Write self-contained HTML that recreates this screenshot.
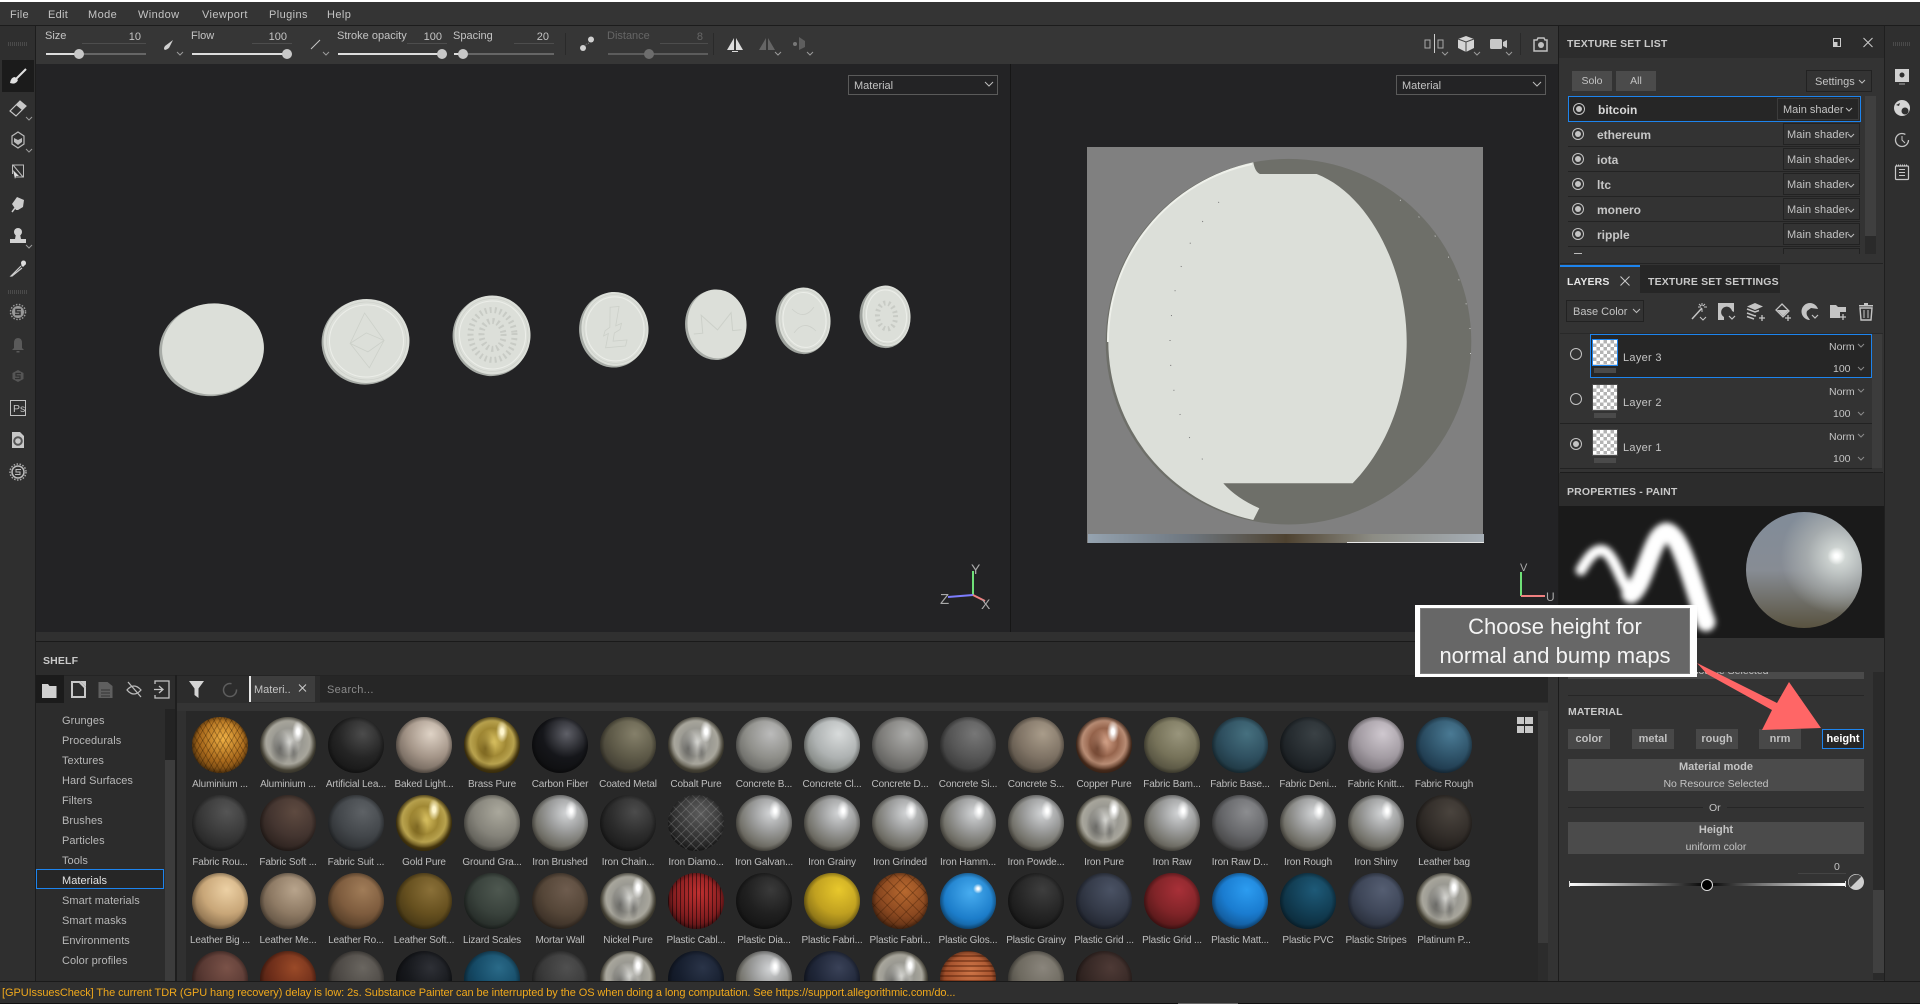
<!DOCTYPE html>
<html lang="en"><head><meta charset="utf-8"><title>Substance Painter</title>
<style>
html,body{margin:0;padding:0}
body{width:1920px;height:1004px;position:relative;overflow:hidden;background:#333;font-family:"Liberation Sans",sans-serif;font-size:11px;color:#c4c4c4}
.r{position:absolute}
.t{position:absolute;line-height:14px;white-space:nowrap;margin-top:1px}
.h{font-weight:bold;font-size:10.5px;color:#c9c9c9;letter-spacing:.15px}
.d{position:absolute;border:1px solid #555;box-sizing:border-box;color:#c4c4c4;line-height:20px;padding-left:5px}
.btn{position:absolute;background:#4b4b4b;text-align:center;color:#c4c4c4;line-height:21px;font-size:10.5px}
.mb{font-weight:bold;font-size:11px;background:#484848;color:#c0c0c0;top:729px;height:20px;width:42px}
.row{position:absolute;left:1568px;width:292px;height:1px;background:#232323}
.dd{position:absolute;left:1783px;width:77px;height:22px;border:1px solid #222;box-sizing:border-box;line-height:22px;padding-left:3px;color:#c4c4c4;font-size:11px;letter-spacing:.1px}
.nm{font-weight:bold;font-size:12px;color:#c6c6c6;left:1597px}
.cat{left:62px;font-size:11px;letter-spacing:.05px;color:#b8b8b8}
#grid{position:absolute;left:186px;top:717px;width:1352px;height:264px;overflow:hidden;display:flex;flex-wrap:wrap;align-content:flex-start}
.c{position:relative;width:68px;height:78px;flex:none}
.c i{position:absolute;left:6px;top:0;width:56px;height:56px;border-radius:50%;background:radial-gradient(circle 50px at 62% 30%,var(--a),var(--b) 48%,var(--c) 100%)}
.c i::after{content:"";position:absolute;left:0;top:0;width:56px;height:56px;border-radius:50%;background:radial-gradient(circle 28px at 50% 50%,rgba(0,0,0,0) 84%,rgba(0,0,0,.3) 100%)}
.c span{position:absolute;left:0;top:61px;width:68px;text-align:center;line-height:14px;font-size:10px;letter-spacing:-.15px;color:#bdbdbd;white-space:nowrap}
.c i.st{background:radial-gradient(ellipse 6px 10px at 70% 28%,#fff 20%,rgba(255,255,255,0) 100%),radial-gradient(circle 44px at 62% 32%,#d4d6d8,#a0a1a1 38%,#77766f 70%,#4a463c 100%)}
.c i.ch{background:radial-gradient(ellipse 6px 11px at 68% 26%,#fff 25%,rgba(255,255,255,0) 100%),radial-gradient(ellipse 10px 18px at 36% 56%,rgba(30,30,30,.45),rgba(30,30,30,0)),radial-gradient(ellipse 5px 12px at 60% 62%,rgba(40,40,40,.35),rgba(40,40,40,0)),radial-gradient(circle 28px at 50% 45%,#d8d8d4,#9a9992 50%,#a8a69c 78%,#4e4a3c 100%)}
.c i.gd{background:radial-gradient(ellipse 6px 11px at 68% 26%,#fff6cc 25%,rgba(255,255,255,0) 100%),radial-gradient(ellipse 10px 18px at 38% 56%,rgba(70,50,0,.5),rgba(70,50,0,0)),radial-gradient(circle 28px at 50% 45%,#e0c866,#a08834 50%,#b8a24e 78%,#4e3d10 100%)}
.c i.cu{background:radial-gradient(ellipse 6px 11px at 66% 26%,#fff 25%,rgba(255,255,255,0) 100%),radial-gradient(ellipse 10px 18px at 38% 56%,rgba(60,25,10,.5),rgba(60,25,10,0)),radial-gradient(circle 28px at 50% 45%,#dcaa90,#96644c 50%,#b88c74 78%,#50301f 100%)}
.c i.or{background-image:repeating-linear-gradient(60deg,rgba(40,20,0,.3) 0 1px,transparent 1px 5px),repeating-linear-gradient(-60deg,rgba(40,20,0,.3) 0 1px,transparent 1px 5px),radial-gradient(circle 46px at 56% 38%,#efb044,#a8691c 50%,#3c2408 100%)}
.c i.rd{background-image:repeating-linear-gradient(90deg,rgba(0,0,0,.5) 0 1px,transparent 1px 4px),radial-gradient(circle 46px at 55% 35%,#bf3030,#851e20 55%,#2e0b0c 100%)}
.c i.wd{background-image:repeating-linear-gradient(0deg,rgba(70,20,0,.4) 0 2px,transparent 2px 5px),radial-gradient(circle 46px at 55% 35%,#cf7648,#a04e2a 55%,#451e0e 100%)}
.c i.dm{background-image:repeating-linear-gradient(45deg,rgba(160,160,160,.28) 0 1px,transparent 1px 7px),repeating-linear-gradient(-45deg,rgba(160,160,160,.28) 0 1px,transparent 1px 7px),radial-gradient(circle 46px at 58% 32%,#5c5c5c,#333 55%,#111 100%)}
.c i.ob{background-image:repeating-linear-gradient(45deg,rgba(50,20,0,.3) 0 1px,transparent 1px 9px),repeating-linear-gradient(-45deg,rgba(50,20,0,.3) 0 1px,transparent 1px 9px),radial-gradient(circle 46px at 58% 32%,#b8692f,#8a4820 55%,#3e1e0c 100%)}
.c i.bg{background:radial-gradient(circle 5px at 68% 28%,#fff 20%,rgba(255,255,255,0) 100%),radial-gradient(circle 48px at 55% 35%,#48adf0,#1c7dca 55%,#0a3a60 100%)}
</style></head><body>

<!-- base regions -->
<div class="r" style="left:0;top:0;width:1920px;height:2px;background:#fff"></div>
<div class="r" style="left:0;top:2px;width:1920px;height:23px;background:#343434"></div>
<div class="r" style="left:0;top:25px;width:1920px;height:1px;background:#1c1c1c"></div>
<div class="r" style="left:0;top:26px;width:35px;height:955px;background:#2f2f2f"></div>
<div class="r" style="left:35px;top:26px;width:1px;height:955px;background:#1d1d1d"></div>
<div class="r" style="left:36px;top:26px;width:1522px;height:38px;background:#363636"></div>
<div class="r" style="left:36px;top:64px;width:1522px;height:568px;background:#232325"></div>
<div class="r" style="left:1010px;top:64px;width:1px;height:568px;background:#161616"></div>
<div class="r" style="left:36px;top:632px;width:1522px;height:9px;background:#303030"></div>
<div class="r" style="left:36px;top:641px;width:1522px;height:1px;background:#1a1a1a"></div>
<div class="r" style="left:36px;top:642px;width:1522px;height:339px;background:#2c2c2c"></div>
<div class="r" style="left:1558px;top:26px;width:1px;height:955px;background:#1c1c1c"></div>
<div class="r" style="left:1559px;top:26px;width:325px;height:32px;background:#2c2c2c"></div>
<div class="r" style="left:1884px;top:26px;width:1px;height:955px;background:#1f1f1f"></div>
<div class="r" style="left:1885px;top:26px;width:35px;height:955px;background:#2f2f2f"></div>

<!-- menu -->
<div class="t" style="left:10px;top:7px;letter-spacing:.3px">File</div>
<div class="t" style="left:48px;top:7px;letter-spacing:.3px">Edit</div>
<div class="t" style="left:88px;top:7px;letter-spacing:.4px">Mode</div>
<div class="t" style="left:138px;top:7px;letter-spacing:.4px">Window</div>
<div class="t" style="left:202px;top:7px;letter-spacing:.4px">Viewport</div>
<div class="t" style="left:269px;top:7px;letter-spacing:.4px">Plugins</div>
<div class="t" style="left:327px;top:7px;letter-spacing:.4px">Help</div>

<!-- toolbar labels -->
<div class="t" style="left:45px;top:28px">Size</div><div class="t" style="left:100px;top:29px;width:41px;text-align:right">10</div>
<div class="t" style="left:191px;top:28px">Flow</div><div class="t" style="left:250px;top:29px;width:37px;text-align:right">100</div>
<div class="t" style="left:337px;top:28px">Stroke opacity</div><div class="t" style="left:410px;top:29px;width:32px;text-align:right">100</div>
<div class="t" style="left:453px;top:28px">Spacing</div><div class="t" style="left:510px;top:29px;width:39px;text-align:right">20</div>
<div class="t" style="left:607px;top:28px;color:#666">Distance</div><div class="t" style="left:670px;top:29px;width:33px;text-align:right;color:#666">8</div>

<!-- viewport dropdowns -->
<div class="d" style="left:848px;top:75px;width:150px;height:20px;border-color:#5a5a5a">Material</div>
<div class="d" style="left:1396px;top:75px;width:150px;height:20px;border-color:#5a5a5a">Material</div>

<!-- scene + icons -->
<svg class="r" style="left:0;top:0" width="1920" height="1004" viewBox="0 0 1920 1004">
<defs>
<linearGradient id="sg" x1="0" x2="1"><stop offset="0" stop-color="#95a3b0"/><stop offset=".25" stop-color="#6e7780"/><stop offset=".5" stop-color="#4e4230"/><stop offset=".72" stop-color="#8c8c84"/><stop offset="1" stop-color="#a5adb5"/></linearGradient>
<filter id="bl" x="-20%" y="-20%" width="140%" height="140%"><feGaussianBlur stdDeviation="3"/></filter>
<clipPath id="pc"><rect x="1559" y="506" width="325" height="132"/></clipPath>
</defs>

<!-- sliders -->
<g stroke-width="2">
<path d="M46 54H146" stroke="#666"/><path d="M46 54H79" stroke="#ddd"/>
<path d="M192 54H292" stroke="#666"/><path d="M192 54H287" stroke="#ddd"/>
<path d="M338 54H447" stroke="#666"/><path d="M338 54H442" stroke="#ddd"/>
<path d="M454 54H554" stroke="#666"/><path d="M454 54H463" stroke="#ddd"/>
<path d="M608 54H708" stroke="#5c5c5c"/>
</g>
<path d="M82 43.500H146M252 43.500H292M407 43.500H447M514 43.500H554M660 43.500H708" stroke="#4d4d4d"/>
<circle cx="79" cy="54" r="5" fill="#c8c8c8"/><circle cx="287" cy="54" r="5" fill="#c8c8c8"/><circle cx="442" cy="54" r="5" fill="#c8c8c8"/><circle cx="463" cy="54" r="5" fill="#c8c8c8"/><circle cx="649" cy="54" r="5" fill="#6d6d6d"/>
<path d="M565.500 33V55M713.500 33V55M1520.500 33V55" stroke="#2a2a2a"/>

<!-- toolbar icons -->
<path d="M173 40L165 46Q163 49 165 50Q169 49 170 46Z" fill="#d0d0d0"/>
<path d="M311 49L320 40" stroke="#c8c8c8"/>
<circle cx="591" cy="39.500" r="3" fill="#d0d0d0"/><circle cx="583" cy="48" r="3" fill="#d0d0d0"/><path d="M589 43L585 45" stroke="#888" stroke-dasharray="1 1"/>
<path d="M734 38V50H727ZM736 38V50H743Z" fill="#dcdcdc"/><path d="M732 51h6v1h-6z" fill="#dcdcdc"/>
<path d="M766 38V50H759ZM768 38V50H775Z" fill="#656565"/>
<circle cx="795" cy="44" r="2" fill="#777"/><path d="M799 37V50L805 47V41Z" fill="#5e5e5e"/>
<path d="M1425 40h5v8h-5zM1438 40h5v8h-5z" fill="none" stroke="#aaa"/><path d="M1434.500 34V53" stroke="#ccc"/>
<path d="M1466 36l8 3v9l-8 4l-8-4v-9z" fill="#d4d4d4"/><path d="M1466 42v10M1458 39l8 3l8-3" stroke="#444" fill="none"/>
<rect x="1490" y="39" width="12" height="10" rx="1.500" fill="#c8c8c8"/><path d="M1503 42l4-2v8l-4-2z" fill="#c8c8c8"/>
<path d="M1534 40h3l1-2h6l1 2h2v11h-13z" fill="none" stroke="#c0c0c0" stroke-width="1.500"/><circle cx="1541" cy="45" r="3" fill="#c0c0c0"/>
<g fill="none" stroke="#9a9a9a"><path d="M177 52l3 3l3-3M323 52l3 3l3-3M775 52l3 3l3-3M807 52l3 3l3-3M1442 52l3 3l3-3M1474 52l3 3l3-3M1506 52l3 3l3-3"/>
<path d="M26 85l3 3l3-3M26 117l3 3l3-3M26 149l3 3l3-3M26 245l3 3l3-3"/></g>

<!-- left tools -->
<rect x="2" y="60" width="32" height="32" fill="#1b1b1b"/>
<path d="M8 44H28M8 292H28" stroke="#4a4a4a" stroke-width="4" stroke-dasharray="1 1"/>
<path d="M26 69L16 79" stroke="#e0e0e0" stroke-width="2"/><path d="M10 83q1-6 5-6l3 3q-2 5-8 3z" fill="#e0e0e0"/>
<path d="M10 111L20 101L26 106L16 116Z" fill="none" stroke="#c8c8c8" stroke-width="1.200"/><path d="M16 105L20 101L26 106L22 110Z" fill="#c8c8c8"/>
<path d="M18 132l6 4v8l-6 4l-6-4v-8z" fill="none" stroke="#bbb" stroke-width="1.200"/><path d="M14 138l4 2l4-2v4l-4 3l-4-3z" fill="#bbb"/>
<path d="M15.500 177h8v-12h-11v9M13 165l10 12" fill="none" stroke="#bbb"/><path d="M13 170l6 6h-3l-1 3z" fill="#ddd"/>
<path d="M17 197l7 3l-1 7l-5 3l-2 0l-4-6z" fill="#ccc"/><path d="M15 208l-3 4" stroke="#ccc" stroke-width="1.500"/>
<circle cx="18" cy="232" r="4" fill="#d2d2d2"/><path d="M16 234h4l1 5h5v4H10v-4h5z" fill="#d2d2d2"/>
<path d="M24 262l2 2l-3 3l-2-2z" fill="#ddd"/><path d="M21 266L12 275l-1 1 1 0L22 268" fill="none" stroke="#ccc" stroke-width="1.200"/><circle cx="23.500" cy="263" r="2.500" fill="#ddd"/>
<circle cx="18" cy="312" r="6" fill="#999"/><circle cx="18" cy="312" r="7.500" fill="none" stroke="#999" stroke-width="1.500" stroke-dasharray="1.500 1.500"/><path d="M21 309.500h-5v2.500h4v2.500h-5" stroke="#2f2f2f" stroke-width="1.500" fill="none"/>
<path d="M18 338q4 0 4 5v5l2 2H12l2-2v-5q0-5 4-5z" fill="#5a5a5a"/><rect x="16.500" y="351" width="3" height="1.500" fill="#5a5a5a"/>
<path d="M18 370l5.500 3v6l-5.500 3l-5.500-3v-6z" fill="#555"/><path d="M21 373.500h-5v2.500h4v2.500h-5" stroke="#2f2f2f" stroke-width="1.200" fill="none"/>
<rect x="10.500" y="400.500" width="15" height="15" fill="none" stroke="#c0c0c0"/>
<text x="13" y="412" font-size="10.500" fill="#c4c4c4" font-family="Liberation Sans, sans-serif">Ps</text>
<path d="M12 432h8l4 4v12H12z" fill="#c8c8c8"/><circle cx="18" cy="441" r="3.800" fill="none" stroke="#555" stroke-width="2"/>
<circle cx="18" cy="472" r="6" fill="none" stroke="#bbb" stroke-width="1.500"/><circle cx="18" cy="472" r="8" fill="none" stroke="#aaa" stroke-width="1.500" stroke-dasharray="1.500 1.500"/><path d="M21 469.500h-5v2.500h4v2.500h-5" stroke="#bbb" fill="none"/>

<!-- right strip icons -->
<path d="M1893 44H1911" stroke="#4a4a4a" stroke-width="4" stroke-dasharray="1 1"/>
<path d="M1895 69h14v13h-14z" fill="#d0d0d0"/><circle cx="1902" cy="75" r="2.500" fill="#2f2f2f"/><path d="M1899 84h6" stroke="#aaa"/>
<circle cx="1902" cy="108" r="8" fill="#d4d4d4"/><circle cx="1905" cy="111" r="3.500" fill="#2f2f2f"/><path d="M1896 105l4-2l-1 3z" fill="#2f2f2f"/>
<circle cx="1902" cy="140" r="6.500" fill="none" stroke="#c4c4c4" stroke-width="1.300" stroke-dasharray="34 7"/><path d="M1902 136v4l3 3" stroke="#c4c4c4" fill="none"/>
<rect x="1895.500" y="166" width="13" height="13.500" rx="1" fill="none" stroke="#c8c8c8" stroke-width="1.200"/><path d="M1899 169.500h6M1899 172.500h6M1899 175.500h6" stroke="#c8c8c8"/>
<path d="M1896 165h12" stroke="#c8c8c8" stroke-dasharray="1 1"/>

<!-- coins -->
<g fill="#dcdfd9">
<g transform="rotate(-6 212 349)"><ellipse cx="211" cy="350" rx="52" ry="46" fill="#a8aca7"/><ellipse cx="213" cy="349" rx="51" ry="45.500"/></g>
<g transform="rotate(-5 366 341)"><ellipse cx="365" cy="342" rx="43.500" ry="42.500" fill="#a8aca7"/><ellipse cx="366.500" cy="341" rx="43" ry="42"/><ellipse cx="366.500" cy="341" rx="37" ry="36" fill="none" stroke="#eceee9"/><ellipse cx="366.500" cy="341" rx="40" ry="39" fill="none" stroke="#cdd0ca" stroke-width=".7"/><path d="M367 313L350 342L367 368L384 342ZM350 342L367 333L384 342L367 352Z" fill="none" stroke="#ccd0c9" stroke-width=".8"/></g>
<g transform="rotate(-5 492 335)"><ellipse cx="491" cy="336" rx="38.500" ry="40" fill="#a8aca7"/><ellipse cx="492.500" cy="335" rx="38" ry="39.500"/><ellipse cx="492.500" cy="335" rx="33" ry="34" fill="none" stroke="#eceee9"/><ellipse cx="492.500" cy="335" rx="35.500" ry="36.500" fill="none" stroke="#cdd0ca" stroke-width=".7"/><ellipse cx="492.500" cy="335" rx="22" ry="25" fill="none" stroke="#c8cbc5" stroke-width="6" stroke-dasharray="2 3"/><ellipse cx="492.500" cy="335" rx="11" ry="14" fill="none" stroke="#c8cbc5" stroke-width="6" stroke-dasharray="2 3"/></g>
<g transform="rotate(-5 614 329)"><ellipse cx="613" cy="330" rx="34" ry="37.500" fill="#a8aca7"/><ellipse cx="615" cy="329" rx="33.500" ry="37"/><ellipse cx="615" cy="329" rx="29" ry="32" fill="none" stroke="#eceee9"/><ellipse cx="615" cy="329" rx="31" ry="34.500" fill="none" stroke="#cdd0ca" stroke-width=".7"/><path d="M612 307h9l-5 19l6-2l-2 6l-6 3l-2 8h14l-2 6h-20l4-14l-5 2l2-5l5-3z" fill="none" stroke="#ccd0c9" stroke-width=".8"/></g>
<g transform="rotate(-5 716 324)"><ellipse cx="715" cy="325" rx="30" ry="35" fill="#a8aca7"/><ellipse cx="717" cy="324" rx="29.500" ry="34.500"/><path d="M693 332h9v-18l15 16l15-16v18h9" fill="none" stroke="#ccd0c9" stroke-width="1"/></g>
<g transform="rotate(-5 804 320)"><ellipse cx="802.500" cy="321" rx="27" ry="33" fill="#9fa39e"/><ellipse cx="804.500" cy="320" rx="26" ry="32.500"/><ellipse cx="804.500" cy="320" rx="21.500" ry="27.500" fill="none" stroke="#eceee9"/><ellipse cx="804.500" cy="320" rx="23.500" ry="30" fill="none" stroke="#cdd0ca" stroke-width=".7"/><path d="M793 308q11 13 22 0M793 332q11-13 22 0" fill="none" stroke="#cdd0ca" stroke-width=".8"/></g>
<g transform="rotate(-5 886 316)"><ellipse cx="884.500" cy="317" rx="25" ry="31" fill="#9fa39e"/><ellipse cx="886.500" cy="316" rx="24" ry="30.500"/><ellipse cx="886.500" cy="316" rx="20" ry="26" fill="none" stroke="#eceee9"/><ellipse cx="886.500" cy="316" rx="22" ry="28" fill="none" stroke="#cdd0ca" stroke-width=".7"/><ellipse cx="886.500" cy="316" rx="9" ry="13" fill="none" stroke="#c8cbc5" stroke-width="5" stroke-dasharray="2 3"/></g>
</g>

<!-- big UV ball -->
<rect x="1087" y="147" width="396" height="396" fill="#808080"/>
<rect x="1088" y="534" width="396" height="9" fill="url(#sg)"/><path d="M1347 542.500H1484" stroke="#e8e8e8"/>
<circle cx="1288.500" cy="341.700" r="182.800" fill="#6e6f69"/>
<path d="M1253.300 162.300A182.800 182.800 0 0 0 1253.300 520L1259.300 508.300Q1236 498 1223.300 483.300H1352.700C1385 450 1406.700 400 1406.700 341.700C1406.700 270 1370 195 1316.700 174H1260Q1255 172 1253.300 162.300Z" fill="#dcdfd9"/>
<path d="M1252 164A181 181 0 0 0 1108 342" fill="none" stroke="#eef0ea" stroke-width="2"/>
<path d="M1219 202C1180 240 1170 300 1170 345C1170 400 1185 440 1213 473" fill="none" stroke="#777" stroke-dasharray="1 24"/>
<path d="M1400 200A182.800 182.800 0 0 1 1470 360" fill="none" stroke="#e4e4e4" stroke-dasharray="1 24" stroke-width=".8"/>

<!-- gizmos -->
<path d="M973 571V596" stroke="#6fe078" stroke-width="2"/><path d="M948 597L973 595" stroke="#7d7dff" stroke-width="2"/><path d="M973 595L985 601" stroke="#f08080" stroke-width="2"/>
<path d="M1521 572V596" stroke="#6fe078" stroke-width="2"/><path d="M1521 596H1545" stroke="#f08080" stroke-width="2"/>
<text x="971" y="574" font-size="14" fill="#aaa" font-family="Liberation Sans, sans-serif">Y</text><text x="940" y="604" font-size="15" fill="#aaa" font-family="Liberation Sans, sans-serif">Z</text><text x="981" y="609" font-size="14" fill="#aaa" font-family="Liberation Sans, sans-serif">X</text>
<text x="1520" y="571" font-size="11" fill="#aaa" font-family="Liberation Sans, sans-serif">V</text><text x="1546" y="601" font-size="12" fill="#aaa" font-family="Liberation Sans, sans-serif">U</text>

<!-- panel icons -->
<g fill="none" stroke="#ccc"><rect x="1833.500" y="38.500" width="7" height="8"/><path d="M1863.500 38L1872.500 47M1872.500 38L1863.500 47M1620.500 276.500L1629.500 285.500M1629.500 276.500L1620.500 285.500"/><rect x="1833.500" y="486.500" width="7" height="8"/><path d="M1863.500 486L1872.500 495M1872.500 486L1863.500 495"/></g>
<rect x="1833.500" y="42" width="4" height="4.500" fill="#ccc"/><rect x="1833.500" y="490" width="4" height="4.500" fill="#ccc"/>

<!-- layer toolbar icons -->
<g fill="#c4c4c4">
<path d="M1692 319L1702 308" stroke="#c4c4c4" stroke-width="1.500"/><path d="M1702 303v3M1702 309v3M1698 307h3M1704 307h3M1699 304l2 2M1705 304l-2 2" stroke="#c4c4c4"/><path d="M1700 317l3 3l3-3" fill="none" stroke="#c4c4c4"/>
<path d="M1718 303h16v9l-2-1a5.500 5.500 0 1 0-8 6v3h-6z"/><path d="M1729 316l3 3l3-3" fill="none" stroke="#c4c4c4" stroke-width="1.200"/>
<path d="M1755 303l8 3.500l-8 3.500l-8-3.500z"/><path d="M1747 309l8 3l4-1.500M1747 313l8 3l1-.4M1747 316.500l7 2.500" fill="none" stroke="#c4c4c4" stroke-width="1.500"/><path d="M1759 318h6M1762 315v6" stroke="#c4c4c4" stroke-width="1.300"/>
<path d="M1782 304l7 7l-6 6l-7-7z" fill="none" stroke="#c4c4c4" stroke-width="1.300"/><path d="M1777 310l12 0l-6 6z"/><path d="M1785 318h6M1788 315v6" stroke="#c4c4c4" stroke-width="1.300"/>
<path d="M1810 303a8.500 8.500 0 1 0 0 17l-2-3a6 6 0 0 1-1-6l4-3l7 1a8.500 8.500 0 0 0-8-6z"/><path d="M1812 315l3 3l3-3" fill="none" stroke="#c4c4c4" stroke-width="1.200"/>
<path d="M1830 305h6l2 2h8v5h-6v6h-10z"/><path d="M1843 314v6M1840 317h6" stroke="#c4c4c4" stroke-width="1.300"/>
<path d="M1859 305h14v1.500h-14zM1864 303h4v2h-4z"/><path d="M1860 308h12l-1 12h-10z" fill="none" stroke="#c4c4c4" stroke-width="1.400"/><path d="M1864 310v8M1868 310v8" stroke="#c4c4c4"/>
</g>

<!-- brush preview -->
<rect x="1559" y="506" width="325" height="132" fill="#1a1a1a"/>
<g clip-path="url(#pc)" filter="url(#bl)" fill="none" stroke="#fff" stroke-linecap="round" stroke-linejoin="round">
<path d="M1581 570C1588 558 1596 546 1606 552C1616 560 1622 585 1631 594" stroke-width="11"/>
<path d="M1631 594C1645 585 1652 532 1667 532C1682 536 1694 590 1706 622" stroke-width="19"/>
</g>
</svg>

<div class="r" style="left:1746px;top:512px;width:116px;height:116px;border-radius:50%;background:radial-gradient(circle 9px at 78% 38%,#fff 20%,rgba(255,255,255,0) 100%),radial-gradient(circle 58px at 80% 38%,rgba(222,228,224,1),rgba(175,180,180,.75) 55%,rgba(170,175,175,0) 100%),linear-gradient(#818c99 0%,#878c94 50%,#595340 100%)"></div>

<!-- texture set list -->
<div class="t h" style="left:1567px;top:36px">TEXTURE SET LIST</div>
<div class="btn" style="left:1572px;top:71px;width:40px;height:20px">Solo</div>
<div class="btn" style="left:1616px;top:71px;width:40px;height:20px">All</div>
<div class="d" style="left:1806px;top:70px;width:66px;height:22px;border-color:#222;line-height:22px;padding-left:8px">Settings</div>
<div class="r" style="left:1865px;top:96px;width:11px;height:158px;background:#2a2a2a"></div><div class="r" style="left:1865px;top:96px;width:11px;height:140px;background:#3f3f3f"></div>
<div class="r" style="left:1568px;top:96px;width:293px;height:26px;box-sizing:border-box;border:1px solid #1d84ee;background:#262626"></div>
<div class="d" style="left:1777px;top:98px;width:82px;height:22px;border-color:#3c3c3c;line-height:22px">Main shader</div>
<div class="t nm" style="left:1598px;top:102px;color:#d8d8d8">bitcoin</div>
<div class="t nm" style="top:127px">ethereum</div><div class="dd" style="top:123px">Main shader</div><div class="row" style="top:146px"></div>
<div class="t nm" style="top:152px">iota</div><div class="dd" style="top:148px">Main shader</div><div class="row" style="top:171px"></div>
<div class="t nm" style="top:177px">ltc</div><div class="dd" style="top:173px">Main shader</div><div class="row" style="top:196px"></div>
<div class="t nm" style="top:202px">monero</div><div class="dd" style="top:198px">Main shader</div><div class="row" style="top:221px"></div>
<div class="t nm" style="top:227px">ripple</div><div class="dd" style="top:223px">Main shader</div><div class="row" style="top:246px"></div>
<div class="r" style="left:1783px;top:248px;width:77px;height:6px;border:1px solid #222;border-bottom:0;box-sizing:border-box"></div>
<div class="r" style="left:1574px;top:253px;width:8px;height:1px;background:#bbb"></div>

<!-- layers -->
<div class="r" style="left:1560px;top:263px;width:323px;height:1px;background:#232323"></div>
<div class="r" style="left:1640px;top:265px;width:140px;height:28px;background:#262626"></div>
<div class="r" style="left:1560px;top:265px;width:80px;height:2px;background:#1d84ee"></div>
<div class="t h" style="left:1567px;top:274px;color:#e6e6e6">LAYERS</div>
<div class="t h" style="left:1648px;top:274px">TEXTURE SET SETTINGS</div>
<div class="d" style="left:1566px;top:300px;width:78px;height:22px;border-color:#222;line-height:22px;padding-left:6px">Base Color</div>
<div class="r" style="left:1560px;top:333px;width:323px;height:1px;background:#292929"></div>
<div class="r" style="left:1590px;top:334px;width:282px;height:44px;box-sizing:border-box;border:1px solid #1d84ee;background:#262626"></div>
<div class="r" style="left:1872px;top:334px;width:10px;height:134px;background:#3c3c3c"></div>
<div class="r" style="left:1560px;top:423px;width:312px;height:1px;background:#222"></div>
<div class="r" style="left:1560px;top:468px;width:312px;height:1px;background:#222"></div>
<div class="r" style="left:1560px;top:472px;width:323px;height:1px;background:#1d1d1d"></div>
<div class="r" style="left:1559px;top:473px;width:325px;height:33px;background:#2c2c2c"></div>
<div class="t h" style="left:1567px;top:484px">PROPERTIES - PAINT</div>

<!-- checker thumbs -->
<div class="r" style="left:1592px;top:339px;width:26px;height:27px;box-sizing:border-box;border:1px solid #1d84ee;background:repeating-conic-gradient(#b4b4b4 0 25%,#fff 0 50%) 0 0/7px 7px"></div>
<div class="r" style="left:1592px;top:384px;width:26px;height:27px;box-sizing:border-box;border:1px solid #4a4a4a;background:repeating-conic-gradient(#b4b4b4 0 25%,#fff 0 50%) 0 0/7px 7px"></div>
<div class="r" style="left:1592px;top:429px;width:26px;height:27px;box-sizing:border-box;border:1px solid #4a4a4a;background:repeating-conic-gradient(#b4b4b4 0 25%,#fff 0 50%) 0 0/7px 7px"></div>
<div class="r" style="left:1594px;top:368px;width:22px;height:5px;background:#4a4a4a"></div>
<div class="r" style="left:1594px;top:413px;width:22px;height:5px;background:#4a4a4a"></div>
<div class="r" style="left:1594px;top:458px;width:22px;height:5px;background:#4a4a4a"></div>
<div class="t" style="left:1623px;top:350px;letter-spacing:.3px">Layer 3</div>
<div class="t" style="left:1623px;top:395px;letter-spacing:.3px">Layer 2</div>
<div class="t" style="left:1623px;top:440px;letter-spacing:.3px">Layer 1</div>
<div class="t" style="left:1829px;top:339px;font-size:10.500px">Norm</div><div class="t" style="left:1833px;top:361px;font-size:10.500px">100</div>
<div class="t" style="left:1829px;top:384px;font-size:10.500px">Norm</div><div class="t" style="left:1833px;top:406px;font-size:10.500px">100</div>
<div class="t" style="left:1829px;top:429px;font-size:10.500px">Norm</div><div class="t" style="left:1833px;top:451px;font-size:10.500px">100</div>

<!-- properties body -->
<div class="r" style="left:1559px;top:638px;width:314px;height:343px;background:#333"></div>
<div class="r" style="left:1873px;top:672px;width:11px;height:308px;background:#2a2a2a"></div>
<div class="r" style="left:1873px;top:890px;width:11px;height:83px;background:#404040"></div>
<div class="r" style="left:1568px;top:672px;width:296px;height:7px;background:#4a4a4a;overflow:hidden"><div class="t" style="left:0;width:296px;text-align:center;top:-9px;font-size:10.500px">No Resource Selected</div></div>
<div class="r" style="left:1568px;top:695px;width:296px;height:1px;background:#262626"></div>
<div class="t h" style="left:1568px;top:704px">MATERIAL</div>
<div class="btn mb" style="left:1568px">color</div>
<div class="btn mb" style="left:1632px">metal</div>
<div class="btn mb" style="left:1696px">rough</div>
<div class="btn mb" style="left:1759px">nrm</div>
<div class="btn mb" style="left:1822px;box-sizing:border-box;border:1px solid #1d84ee;line-height:19px;background:#262626;color:#fff">height</div>
<div class="btn" style="left:1568px;top:759px;width:296px;height:32px"><div style="font-weight:bold;line-height:16px;font-size:11px">Material mode</div><div style="line-height:18px;font-size:10.500px">No Resource Selected</div></div>
<div class="r" style="left:1568px;top:807px;width:135px;height:1px;background:#262626"></div>
<div class="r" style="left:1727px;top:807px;width:137px;height:1px;background:#262626"></div>
<div class="t" style="left:1709px;top:800px;font-size:10.500px">Or</div>
<div class="btn" style="left:1568px;top:822px;width:296px;height:32px"><div style="font-weight:bold;line-height:16px;font-size:11px">Height</div><div style="line-height:18px;font-size:10.500px">uniform color</div></div>
<div class="t" style="left:1834px;top:859px;font-size:10.500px">0</div>
<div class="r" style="left:1798px;top:873px;width:48px;height:1px;background:#444"></div>
<div class="r" style="left:1569px;top:883px;width:276px;height:3px;background:linear-gradient(90deg,#fff,#777 30%,#000 50%,#777 70%,#fff)"></div>
<div class="r" style="left:1569px;top:881px;width:1px;height:6px;background:#ddd"></div><div class="r" style="left:1845px;top:881px;width:1px;height:6px;background:#ddd"></div>
<div class="r" style="left:1701px;top:879px;width:10px;height:10px;border-radius:50%;background:#000;border:1px solid #ddd"></div>
<svg class="r" style="left:1847px;top:873px" width="18" height="18"><circle cx="9" cy="9" r="7.500" fill="#cfcfcf" stroke="#cfcfcf"/><path d="M3.700 14.300A7.500 7.500 0 0 1 14.300 3.700Z" fill="#444"/></svg>

<!-- shelf -->
<div class="t h" style="left:43px;top:653px">SHELF</div>
<div class="r" style="left:36px;top:675px;width:1512px;height:1px;background:#242424"></div>
<div class="r" style="left:36px;top:675px;width:28px;height:28px;background:#1b1b1b"></div>
<div class="r" style="left:175px;top:675px;width:2px;height:306px;background:#1e1e1e"></div>
<div class="r" style="left:165px;top:709px;width:10px;height:272px;background:#232323"></div>
<div class="r" style="left:165px;top:760px;width:10px;height:221px;background:#3c3c3c"></div>
<div class="t cat" style="top:713px">Grunges</div>
<div class="t cat" style="top:733px">Procedurals</div>
<div class="t cat" style="top:753px">Textures</div>
<div class="t cat" style="top:773px">Hard Surfaces</div>
<div class="t cat" style="top:793px">Filters</div>
<div class="t cat" style="top:813px">Brushes</div>
<div class="t cat" style="top:833px">Particles</div>
<div class="t cat" style="top:853px">Tools</div>
<div class="r" style="left:36px;top:869px;width:128px;height:20px;box-sizing:border-box;border:1px solid #1d84ee;background:#262626"></div>
<div class="t cat" style="top:873px;color:#e2e2e2">Materials</div>
<div class="t cat" style="top:893px">Smart materials</div>
<div class="t cat" style="top:913px">Smart masks</div>
<div class="t cat" style="top:933px">Environments</div>
<div class="t cat" style="top:953px">Color profiles</div>

<div class="r" style="left:177px;top:703px;width:1371px;height:8px;background:#343434"></div>
<div class="r" style="left:186px;top:711px;width:1352px;height:270px;background:#282828"></div>
<div class="r" style="left:1538px;top:711px;width:10px;height:232px;background:#3a3a3a"></div>
<div class="r" style="left:1548px;top:642px;width:10px;height:339px;background:#333"></div>
<div class="r" style="left:177px;top:711px;width:9px;height:270px;background:#303030"></div>
<div class="r" style="left:249px;top:676px;width:66px;height:26px;background:#3d3d3d;border-left:2px solid #e8e8e8;box-sizing:border-box"></div>
<div class="t" style="left:254px;top:682px;font-size:11px">Materi..</div>
<div class="r" style="left:320px;top:676px;width:1228px;height:26px;background:#262626"></div>
<div class="t" style="left:327px;top:682px;color:#8a8a8a;letter-spacing:.3px">Search...</div>

<svg class="r" style="left:0;top:660px" width="340" height="50" viewBox="0 660 340 50">
<path d="M42 684h6l1.500 2h7v12H42z" fill="#d0d0d0"/>
<path d="M71 681h9l6 6V698H71Z M73 683V696H84V688L79 683Z" fill="#c8c8c8" fill-rule="evenodd"/><path d="M80 681h6v6z" fill="#c8c8c8"/>
<path d="M98.500 682h9l5 4v12h-14z" fill="#5f5f5f"/><path d="M101 690h9M101 693h9M101 696h9" stroke="#333"/>
<path d="M127 690q7-8 14 0q-7 8-14 0zM128 682l13 15" fill="none" stroke="#bbb" stroke-width="1.300"/>
<path d="M155 684v-3h14v17h-14v-3" fill="none" stroke="#c4c4c4" stroke-width="1.300"/><path d="M154 689.500h8M159 686l4 3.500l-4 3.500" fill="none" stroke="#c4c4c4" stroke-width="1.300"/>
<path d="M189 681h15l-5.500 7.500V698l-4-3v-6.500Z" fill="#d4d4d4"/>
<circle cx="230" cy="690" r="6.500" fill="none" stroke="#5e5e5e" stroke-width="1.500" stroke-dasharray="32 8"/>
<path d="M299 684.500l7 7M306 684.500l-7 7" stroke="#ccc"/>
</svg>

<div class="r" style="left:1517px;top:717px;width:7px;height:7px;background:#c8c8c8"></div><div class="r" style="left:1525px;top:717px;width:8px;height:7px;background:#c8c8c8"></div>
<div class="r" style="left:1517px;top:726px;width:7px;height:7px;background:#c8c8c8"></div><div class="r" style="left:1525px;top:726px;width:8px;height:7px;background:#c8c8c8"></div>

<div id="grid">
<div class="c"><i class="or"></i><span>Aluminium ...</span></div>
<div class="c"><i class="ch"></i><span>Aluminium ...</span></div>
<div class="c"><i style="--a:#4c4c4c;--b:#252525;--c:#0f0f0f"></i><span>Artificial Lea...</span></div>
<div class="c"><i style="--a:#dfd3c6;--b:#a39487;--c:#4e453d"></i><span>Baked Light...</span></div>
<div class="c"><i class="gd"></i><span>Brass Pure</span></div>
<div class="c"><i style="--a:#5f6068;--b:#15161a;--c:#0a0a0a"></i><span>Carbon Fiber</span></div>
<div class="c"><i style="--a:#85806a;--b:#5e5a48;--c:#2f2c26"></i><span>Coated Metal</span></div>
<div class="c"><i class="ch"></i><span>Cobalt Pure</span></div>
<div class="c"><i style="--a:#bbb;--b:#8f8f8a;--c:#4e4e4a"></i><span>Concrete B...</span></div>
<div class="c"><i style="--a:#d8dbdb;--b:#aeb2b2;--c:#62665f"></i><span>Concrete Cl...</span></div>
<div class="c"><i style="--a:#acacaa;--b:#807f7c;--c:#454543"></i><span>Concrete D...</span></div>
<div class="c"><i style="--a:#777;--b:#565656;--c:#2a2a2a"></i><span>Concrete Si...</span></div>
<div class="c"><i style="--a:#a99c8a;--b:#7f7365;--c:#403a32"></i><span>Concrete S...</span></div>
<div class="c"><i class="cu"></i><span>Copper Pure</span></div>
<div class="c"><i style="--a:#99957c;--b:#767259;--c:#3b392d"></i><span>Fabric Bam...</span></div>
<div class="c"><i style="--a:#46707f;--b:#2f5060;--c:#14262d"></i><span>Fabric Base...</span></div>
<div class="c"><i style="--a:#3a4145;--b:#262c30;--c:#101316"></i><span>Fabric Deni...</span></div>
<div class="c"><i style="--a:#cfc8cf;--b:#a39ca3;--c:#5a545a"></i><span>Fabric Knitt...</span></div>
<div class="c"><i style="--a:#4a7a94;--b:#2e5268;--c:#122536"></i><span>Fabric Rough</span></div>

<div class="c"><i style="--a:#555;--b:#3a3a3a;--c:#1a1a1a"></i><span>Fabric Rou...</span></div>
<div class="c"><i style="--a:#5e4a40;--b:#443530;--c:#1d1613"></i><span>Fabric Soft ...</span></div>
<div class="c"><i style="--a:#5e6266;--b:#43474b;--c:#1e2022"></i><span>Fabric Suit ...</span></div>
<div class="c"><i class="gd"></i><span>Gold Pure</span></div>
<div class="c"><i style="--a:#aaa89c;--b:#85837a;--c:#41403b"></i><span>Ground Gra...</span></div>
<div class="c"><i class="st"></i><span>Iron Brushed</span></div>
<div class="c"><i style="--a:#4c4c4c;--b:#2c2c2c;--c:#111"></i><span>Iron Chain...</span></div>
<div class="c"><i class="dm"></i><span>Iron Diamo...</span></div>
<div class="c"><i class="st"></i><span>Iron Galvan...</span></div>
<div class="c"><i class="st"></i><span>Iron Grainy</span></div>
<div class="c"><i class="st"></i><span>Iron Grinded</span></div>
<div class="c"><i class="st"></i><span>Iron Hamm...</span></div>
<div class="c"><i class="st"></i><span>Iron Powde...</span></div>
<div class="c"><i class="ch"></i><span>Iron Pure</span></div>
<div class="c"><i class="st"></i><span>Iron Raw</span></div>
<div class="c"><i style="--a:#8c8d90;--b:#66676a;--c:#2f2e2c"></i><span>Iron Raw D...</span></div>
<div class="c"><i class="st"></i><span>Iron Rough</span></div>
<div class="c"><i class="st"></i><span>Iron Shiny</span></div>
<div class="c"><i style="--a:#4a443e;--b:#332e2a;--c:#161311"></i><span>Leather bag</span></div>

<div class="c"><i style="--a:#ecd0a4;--b:#c8a678;--c:#5f4930"></i><span>Leather Big ...</span></div>
<div class="c"><i style="--a:#b8a48c;--b:#8e7a64;--c:#483c30"></i><span>Leather Me...</span></div>
<div class="c"><i style="--a:#a07c58;--b:#7e5c3e;--c:#3a2a1a"></i><span>Leather Ro...</span></div>
<div class="c"><i style="--a:#8a7038;--b:#66501f;--c:#32280f"></i><span>Leather Soft...</span></div>
<div class="c"><i style="--a:#4e5850;--b:#39423c;--c:#181c1a"></i><span>Lizard Scales</span></div>
<div class="c"><i style="--a:#6e5c4e;--b:#554638;--c:#28201a"></i><span>Mortar Wall</span></div>
<div class="c"><i class="ch"></i><span>Nickel Pure</span></div>
<div class="c"><i class="rd"></i><span>Plastic Cabl...</span></div>
<div class="c"><i style="--a:#3a3a3a;--b:#202020;--c:#0e0e0e"></i><span>Plastic Dia...</span></div>
<div class="c"><i style="--a:#e8c82c;--b:#c0a020;--c:#5a4a10"></i><span>Plastic Fabri...</span></div>
<div class="c"><i class="ob"></i><span>Plastic Fabri...</span></div>
<div class="c"><i class="bg"></i><span>Plastic Glos...</span></div>
<div class="c"><i style="--a:#3e3e3e;--b:#262626;--c:#0f0f0f"></i><span>Plastic Grainy</span></div>
<div class="c"><i style="--a:#4a5264;--b:#343a48;--c:#171a22"></i><span>Plastic Grid ...</span></div>
<div class="c"><i style="--a:#a83038;--b:#802428;--c:#38100f"></i><span>Plastic Grid ...</span></div>
<div class="c"><i style="--a:#2c9cf0;--b:#1a7cd0;--c:#0c3e6e"></i><span>Plastic Matt...</span></div>
<div class="c"><i style="--a:#1e5a78;--b:#123e54;--c:#081e2a"></i><span>Plastic PVC</span></div>
<div class="c"><i style="--a:#555e72;--b:#3e4658;--c:#1c2028"></i><span>Plastic Stripes</span></div>
<div class="c"><i class="ch"></i><span>Platinum P...</span></div>

<div class="c"><i style="--a:#7a5248;--b:#5a3a34;--c:#2a1a16"></i></div>
<div class="c"><i style="--a:#9a4a28;--b:#6e2e1a;--c:#32140c"></i></div>
<div class="c"><i style="--a:#6a6660;--b:#4e4a46;--c:#242220"></i></div>
<div class="c"><i style="--a:#2e3036;--b:#16181c;--c:#08080a"></i></div>
<div class="c"><i style="--a:#2a6a88;--b:#154a66;--c:#0a2433"></i></div>
<div class="c"><i style="--a:#505050;--b:#3a3a3a;--c:#1a1a1a"></i></div>
<div class="c"><i class="ch"></i></div>
<div class="c"><i style="--a:#2a3448;--b:#161e2e;--c:#0a0e18"></i></div>
<div class="c"><i class="st"></i></div>
<div class="c"><i style="--a:#3a4258;--b:#1f2638;--c:#0c0f18"></i></div>
<div class="c"><i class="ch"></i></div>
<div class="c"><i class="wd"></i></div>
<div class="c"><i style="--a:#8a857c;--b:#6e6a60;--c:#35332e"></i></div>
<div class="c"><i style="--a:#4e3a36;--b:#362825;--c:#1a1311"></i></div>
</div>

<!-- status bar -->
<div class="r" style="left:0;top:981px;width:1920px;height:1px;background:#1a1a1a"></div>
<div class="r" style="left:0;top:982px;width:1920px;height:21px;background:#2f2f2f"></div>
<div class="r" style="left:0;top:1003px;width:1920px;height:1px;background:#111"></div>
<div class="r" style="left:1178px;top:1003px;width:60px;height:1px;background:#666"></div>
<div class="t" style="left:2px;top:985px;color:#efa81c;font-size:11px;letter-spacing:-.08px">[GPUIssuesCheck] The current TDR (GPU hang recovery) delay is low: 2s. Substance Painter can be interrupted by the OS when doing a long computation. See https://support.allegorithmic.com/do...</div>

<!-- chevrons and radios on top -->
<svg class="r" style="left:0;top:0" width="1920" height="1004" viewBox="0 0 1920 1004">
<g fill="none" stroke="#bdbdbd">
<path d="M985 82l4 4l4-4M1533 82l4 4l4-4M1859 80l3 3l3-3M1846 108l3 3l3-3M1848 134l3 3l3-3M1848 159l3 3l3-3M1848 184l3 3l3-3M1848 209l3 3l3-3M1848 234l3 3l3-3M1633 309l3.500 3.500l3.500-3.500"/>
<path d="M1858 344l3 3l3-3M1858 367l3 3l3-3M1858 389l3 3l3-3M1858 412l3 3l3-3M1858 434l3 3l3-3M1858 457l3 3l3-3" stroke="#8a8a8a"/>
</g>
<g fill="none" stroke="#c4c4c4"><circle cx="1579" cy="109" r="5.500"/><circle cx="1578" cy="134" r="5.500"/><circle cx="1578" cy="159" r="5.500"/><circle cx="1578" cy="184" r="5.500"/><circle cx="1578" cy="209" r="5.500"/><circle cx="1578" cy="234" r="5.500"/><circle cx="1576" cy="354" r="5.500"/><circle cx="1576" cy="399" r="5.500"/><circle cx="1576" cy="444" r="5.500"/></g>
<g fill="#c4c4c4"><circle cx="1579" cy="109" r="3"/><circle cx="1578" cy="134" r="3"/><circle cx="1578" cy="159" r="3"/><circle cx="1578" cy="184" r="3"/><circle cx="1578" cy="209" r="3"/><circle cx="1578" cy="234" r="3"/><circle cx="1576" cy="444" r="3"/></g>

<!-- annotation arrow -->
<path d="M1697 663L1777 703L1789 682L1821 728L1762 730L1772 710L1707 674Z" fill="#ff6666"/>
</svg>

<!-- annotation box -->
<div class="r" style="left:1415px;top:605px;width:282px;height:72px;background:#fff;box-sizing:border-box;padding:3px 7px 3px 5px">
<div style="width:270px;height:66px;box-sizing:border-box;background:#676767;border:1px solid #7d7d7d;color:#f4f4f4;text-align:center;font-size:22px;line-height:29px;padding-top:3px">Choose height for<br>normal and bump maps</div>
</div>
</body></html>
